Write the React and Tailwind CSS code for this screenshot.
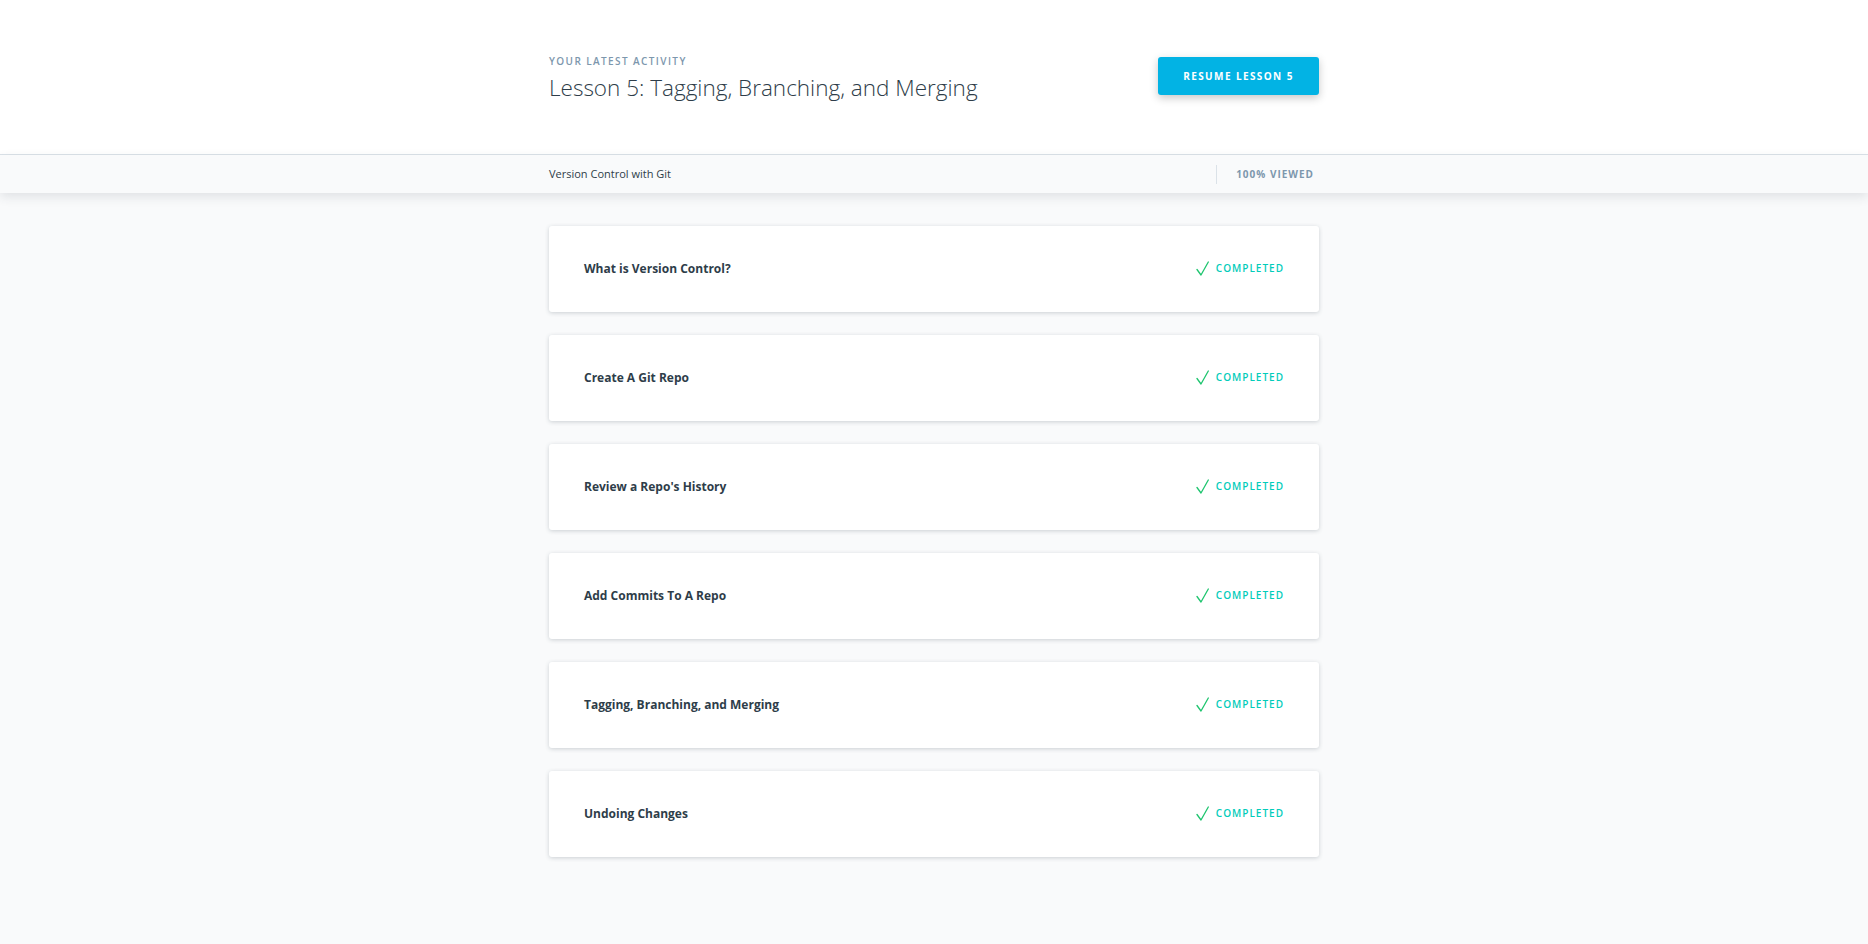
const lessons = [
    'What is Version Control?',
    'Create A Git Repo',
    "Review a Repo's History",
    'Add Commits To A Repo',
    'Tagging, Branching, and Merging',
    'Undoing Changes',
];

function Check() {
    return (
        <svg width="13" height="15" viewBox="0 0 13 15" fill="none" className="shrink-0">
            <path d="M1 8.5 L5 14 L12.3 1" stroke="#1fc56f" strokeWidth="1.3" strokeLinecap="round" strokeLinejoin="round" />
        </svg>
    );
}

function LessonCard({ title }) {
    return (
        <div className="bg-white rounded-[3px] shadow-[0_1px_4px_rgba(46,61,73,0.22)] h-[86px] px-[35px] flex items-center justify-between">
            <span className="text-[12px] font-bold text-[#2e3d49]">{title}</span>
            <span className="flex items-center gap-[7px] -mt-[2px]">
                <Check />
                <span className="text-[10px] font-semibold tracking-[0.1em] text-[#02ccba]">COMPLETED</span>
            </span>
        </div>
    );
}

export default function App() {
    return (
        <div className="min-h-[944px] bg-[#f9fafb]" style={{ fontFamily: '"Open Sans", "Noto Sans", sans-serif' }}>
            <header className="bg-white h-[155px] border-b border-[#dbe2e8]">
                <div className="w-[770px] mx-auto flex items-start justify-between pt-[56px]">
                    <div>
                        <p className="text-[10px] font-semibold tracking-[0.14em] text-[#7d97ad] leading-none">YOUR LATEST ACTIVITY</p>
                        <h1 className="mt-[8px] text-[22.5px] font-light text-[#2e3d49] leading-tight">Lesson 5: Tagging, Branching, and Merging</h1>
                    </div>
                    <button className="mt-[1px] w-[161px] h-[38px] rounded-[3px] bg-[#02b3e4] text-white text-[10px] font-bold tracking-[0.14em] shadow-[0_3px_8px_rgba(0,0,0,0.22)]">
                        RESUME LESSON 5
                    </button>
                </div>
            </header>
            <div className="bg-[#f9fafb] h-[38px] shadow-[0_4px_10px_rgba(46,61,73,0.12)] relative">
                <div className="w-[770px] mx-auto h-full flex items-center justify-between">
                    <span className="text-[11px] text-[#2e3d49]">Version Control with Git</span>
                    <div className="flex items-center h-full">
                        <div className="w-px h-[19px] bg-[#dbe2e8]" />
                        <span className="pl-[19px] pr-[5px] text-[10px] font-bold tracking-[0.1em] text-[#7d97ad]">100% VIEWED</span>
                    </div>
                </div>
            </div>
            <main className="w-[770px] mx-auto pt-[33px] pb-[40px] flex flex-col gap-[23px]">
                {lessons.map((t) => (
                    <LessonCard key={t} title={t} />
                ))}
            </main>
        </div>
    );
}
